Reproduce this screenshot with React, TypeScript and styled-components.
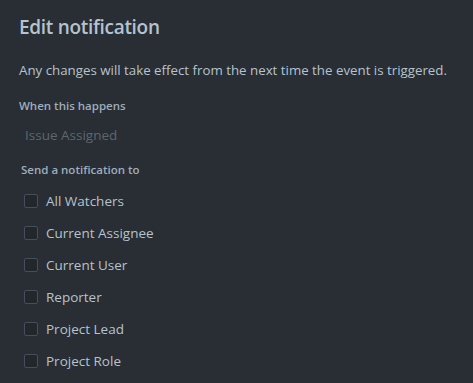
import React, { useState } from "react";
import styled, { createGlobalStyle } from "styled-components";

const GlobalStyle = createGlobalStyle`
  html, body {
    margin: 0;
    padding: 0;
    background: #282e33;
  }
  body {
    font-family: "Open Sans", "Noto Sans", "Liberation Sans", sans-serif;
  }
`;

const Panel = styled.div`
  box-sizing: border-box;
  width: 473px;
  height: 383px;
  background: #282e33;
  padding: 13px 19px 0 19px;
  color: #b6c2cf;
  display: flex;
  flex-direction: column;
`;

const Title = styled.h1`
  margin: 0;
  font-size: 19px;
  font-weight: 600;
  letter-spacing: -0.3px;
  line-height: 28px;
  color: #b6c2cf;
`;

const Intro = styled.p`
  margin: 19px 0 0 0;
  font-size: 13.3px;
  line-height: 20px;
  color: #b6c2cf;
`;

const Label = styled.div<{ $indent?: number }>`
  margin-top: 18px;
  padding-left: ${(p) => p.$indent ?? 0}px;
  font-size: 11.5px;
  font-weight: 600;
  line-height: 16px;
  color: #9fadbc;
`;

const ReadOnly = styled.div`
  padding: 11px 6px 0 6px;
  height: 19px;
  font-size: 13.5px;
  line-height: 20px;
  color: #5d6670;
`;

const Options = styled.div`
  display: flex;
  flex-direction: column;
  margin-top: 7px;
  padding-left: 5px;
`;

const Option = styled.label`
  display: flex;
  align-items: center;
  gap: 8px;
  height: 32px;
  font-size: 13.5px;
  color: #b6c2cf;
  cursor: pointer;
`;

const Box = styled.span<{ $checked: boolean }>`
  box-sizing: border-box;
  width: 14px;
  height: 14px;
  border: 1.5px solid ${(p) => (p.$checked ? "#579dff" : "#454f59")};
  border-radius: 2px;
  background: ${(p) => (p.$checked ? "#579dff" : "#22272b")};
  flex-shrink: 0;
`;

const recipients = [
  "All Watchers",
  "Current Assignee",
  "Current User",
  "Reporter",
  "Project Lead",
  "Project Role",
];

export default function App() {
  const [checked, setChecked] = useState<Record<string, boolean>>({});

  return (
    <>
      <GlobalStyle />
      <Panel>
        <Title>Edit notification</Title>
        <Intro>
          Any changes will take effect from the next time the event is triggered.
        </Intro>
        <Label>When this happens</Label>
        <ReadOnly>Issue Assigned</ReadOnly>
        <Label $indent={2}>Send a notification to</Label>
        <Options>
          {recipients.map((r) => (
            <Option
              key={r}
              onClick={() => setChecked((c) => ({ ...c, [r]: !c[r] }))}
            >
              <Box $checked={!!checked[r]} />
              {r}
            </Option>
          ))}
        </Options>
      </Panel>
    </>
  );
}
